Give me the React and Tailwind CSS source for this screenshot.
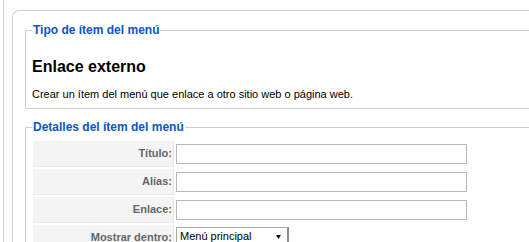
const FIELDS = [
  { label: 'Título:', type: 'text' },
  { label: 'Alías:', type: 'text' },
  { label: 'Enlace:', type: 'text' },
  { label: 'Mostrar dentro:', type: 'select', value: 'Menú principal' },
]

function Row({ field }) {
  return (
    <div className="flex h-[26px] gap-[2px]">
      <div className="flex w-[141px] shrink-0 items-center justify-end border-b border-r border-[#e9e9e9] bg-[#f4f4f4] pr-[1px] text-[11px] font-bold text-[#666]">
        {field.label}
      </div>
      {field.type === 'text' ? (
        <div className="mt-[3px] h-[20px] w-[291px] border border-[#b8b8b8] bg-white" />
      ) : (
        <div className="mt-[2px] flex h-[19px] w-[113px] items-center border border-[#a8a8a8] border-r-2 border-r-[#8a8a8a] bg-white pl-[3px] text-[11px] text-black">
          <span className="flex-1">{field.value}</span>
          <svg width="5" height="4" viewBox="0 0 5 4" className="mr-[6px]">
            <path d="M0 0h5L2.5 4z" fill="#111" />
          </svg>
        </div>
      )}
    </div>
  )
}

export default function App() {
  return (
    <div className="h-[242px] w-[529px] overflow-hidden bg-white font-['Liberation_Sans',Arial,sans-serif]">
      <div className="ml-[3px] h-full border-l border-[#cfcfcf] pl-[8px] pt-[10px]">
        <div className="w-[700px] rounded-tl-[7px] border-l border-t border-[#cfcfcf] pl-[12px]">
          <fieldset className="mt-[12px] border border-[#cfcfcf] px-[6px] pb-[7px]">
            <legend className="px-[1px] text-[12px] leading-[14px] font-bold text-[#0b55c4]">
              Tipo de ítem del menú
            </legend>
            <h2 className="mt-[20px] text-[16px] leading-[20px] font-bold text-black">Enlace externo</h2>
            <p className="mt-[10px] text-[11px] leading-[14px] text-black">
              Crear un ítem del menú que enlace a otro sitio web o página web.
            </p>
          </fieldset>
          <fieldset className="mt-[11px] border border-[#cfcfcf] px-[6px] pb-[7px]">
            <legend className="px-[1px] text-[12px] leading-[14px] font-bold text-[#0b55c4]">
              Detalles del ítem del menú
            </legend>
            <div className="ml-[1px] mt-[7px] flex flex-col gap-[2px]">
              {FIELDS.map(f => (
                <Row key={f.label} field={f} />
              ))}
            </div>
          </fieldset>
        </div>
      </div>
    </div>
  )
}
